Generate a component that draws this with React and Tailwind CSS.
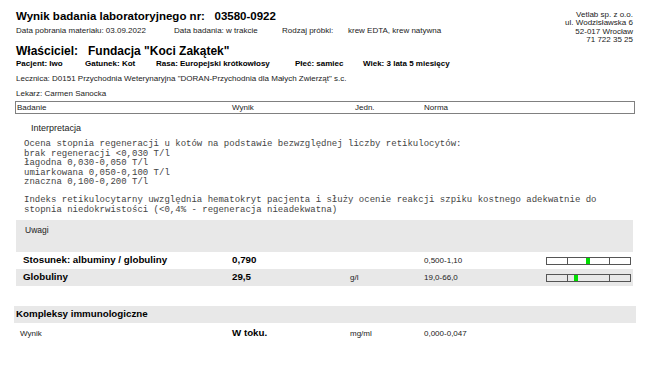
import React from "react";

const rows = [
  { name: "Stosunek: albuminy / globuliny", value: "0,790", unit: "", norm: "0,500-1,10", mark: 39, gray: false },
  { name: "Globuliny", value: "29,5", unit: "g/l", norm: "19,0-66,0", mark: 27, gray: true },
];

const interpretation = [
  "Ocena stopnia regeneracji u kotów na podstawie bezwzględnej liczby retikulocytów:",
  "brak regeneracji <0,030 T/l",
  "łagodna 0,030-0,050 T/l",
  "umiarkowana 0,050-0,100 T/l",
  "znaczna 0,100-0,200 T/l",
];

const RangeBar = ({ mark }) => (
  <div className="relative flex h-[8px] w-[85px] border border-[#555]">
    <div className="w-[21px] border-r border-[#555]" />
    <div className="w-[42px] border-r border-[#555]" />
    <div className="flex-1" />
    <div className="absolute top-0 h-full w-[4px] bg-[#00dd00]" style={{ left: mark }} />
  </div>
);

const App = () => {
  return (
    <div className="relative h-[366px] w-[650px] overflow-hidden bg-white font-['Liberation_Sans',Arial,sans-serif] text-[#222]">
      {/* naglowek */}
      <div className="flex justify-between pl-[16px] pr-[17px] pt-[9px]">
        <div>
          <div className="text-[11.5px] font-bold leading-[14px] text-black">
            Wynik badania laboratoryjnego nr:&nbsp;&nbsp; 03580-0922
          </div>
          <div className="mt-[3px] flex text-[8px] leading-[10px]">
            <span className="w-[158px]">Data pobrania materiału: 03.09.2022</span>
            <span className="w-[108px]">Data badania: w trakcie</span>
            <span className="w-[66px]">Rodzaj próbki:</span>
            <span>krew EDTA, krew natywna</span>
          </div>
          <div className="mt-[8px] text-[12px] font-bold leading-[14px] text-black">
            Właściciel:&nbsp;&nbsp; Fundacja "Koci Zakątek"
          </div>
        </div>
        <div className="mt-[2px] text-right text-[8px] leading-[8.4px]">
          <div>Vetlab sp. z o.o.</div>
          <div>ul. Wodzisławska 6</div>
          <div>52-017 Wrocław</div>
          <div>71 722 35 25</div>
        </div>
      </div>

      <div className="mt-[1px] flex pl-[16px] text-[8px] font-bold leading-[10px] text-black">
        <span className="w-[69px]">Pacjent: Iwo</span>
        <span className="w-[71px]">Gatunek: Kot</span>
        <span className="w-[139px]">Rasa: Europejski krótkowłosy</span>
        <span className="w-[68px]">Płeć: samiec</span>
        <span>Wiek: 3 lata 5 miesięcy</span>
      </div>
      <div className="mt-[5px] pl-[16px] text-[8px] leading-[10px]">
        Lecznica: D0151 Przychodnia Weterynaryjna "DORAN-Przychodnia dla Małych Zwierząt" s.c.
      </div>
      <div className="mt-[5px] pl-[16px] text-[8px] leading-[10px]">Lekarz: Carmen Sanocka</div>

      {/* tabela - naglowek */}
      <div className="ml-[15px] mt-[2px] flex h-[13px] w-[620px] items-center border border-[#808080] text-[8px] leading-[9px]">
        <span className="w-[216px] pl-[1px]">Badanie</span>
        <span className="w-[118px]">Wynik</span>
        <span className="w-[74px] pl-[5px]">Jedn.</span>
        <span>Norma</span>
      </div>

      {/* interpretacja */}
      <div className="ml-[31px] mt-[9px] text-[9px] leading-[11px]">Interpretacja</div>
      <div className="ml-[24px] mt-[6px] font-['Liberation_Mono','Courier_New',monospace] text-[9px] leading-[9.6px] text-[#444]">
        {interpretation.map((l) => (
          <div key={l}>{l}</div>
        ))}
        <div className="h-[8px]" />
        <div>Indeks retikulocytarny uwzględnia hematokryt pacjenta i służy ocenie reakcji szpiku kostnego adekwatnie do</div>
        <div>stopnia niedokrwistości (&lt;0,4% - regeneracja nieadekwatna)</div>
      </div>

      <div className="ml-[16px] mt-[5px] h-[32px] w-[617px] bg-[#e8e8e8] pl-[9px] pt-[5px] text-[8.5px] leading-[10px]">
        Uwagi
      </div>

      {rows.map((r) => (
        <div
          key={r.name}
          className={`ml-[16px] flex h-[17px] w-[617px] items-center text-[9.75px] ${r.gray ? "bg-[#e8e8e8]" : ""}`}
        >
          <span className="w-[216px] pl-[7px] font-bold text-black">{r.name}</span>
          <span className="w-[118px] font-bold text-black">{r.value}</span>
          <span className="w-[74px] text-[8px]">{r.unit}</span>
          <span className="w-[122px] text-[8px]">{r.norm}</span>
          <RangeBar mark={r.mark} />
        </div>
      ))}

      {/* kompleksy */}
      <div className="ml-[14px] mt-[20px] flex h-[17px] w-[622px] items-center bg-[#e8e8e8] pl-[2px] text-[9.75px] font-bold text-black">
        Kompleksy immunologiczne
      </div>
      <div className="ml-[15px] flex h-[19px] items-center pt-[2px] text-[8px]">
        <span className="w-[217px] pl-[5px]">Wynik</span>
        <span className="w-[118px] text-[9.75px] font-bold text-black">W toku.</span>
        <span className="w-[74px]">mg/ml</span>
        <span>0,000-0,047</span>
      </div>
    </div>
  );
};

export default App;
